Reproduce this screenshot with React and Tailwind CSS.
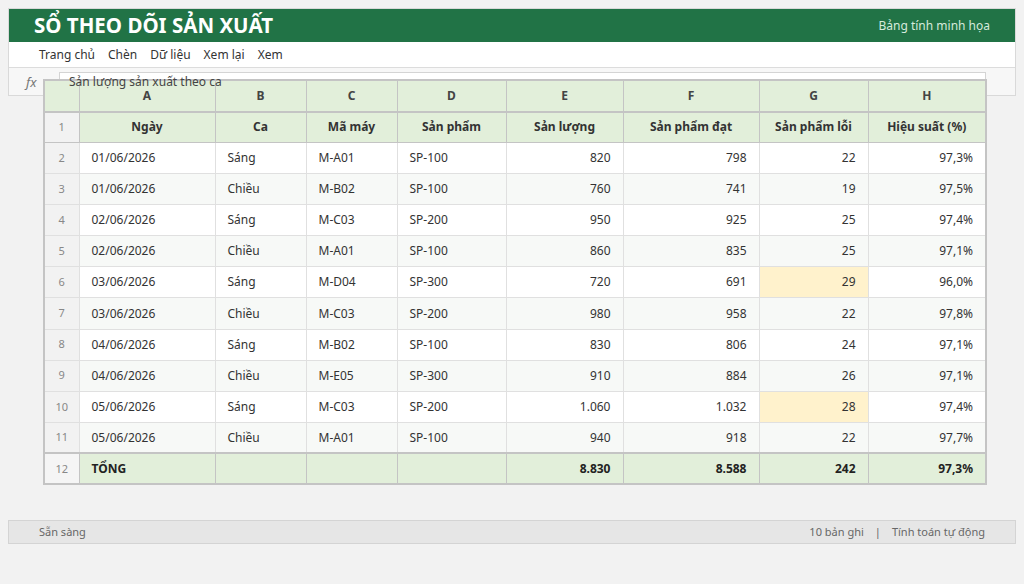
import React from "react";

const rows = [
  ["01/06/2026", "Sáng", "M-A01", "SP-100", "820", "798", "22", "97,3%"],
  ["01/06/2026", "Chiều", "M-B02", "SP-100", "760", "741", "19", "97,5%"],
  ["02/06/2026", "Sáng", "M-C03", "SP-200", "950", "925", "25", "97,4%"],
  ["02/06/2026", "Chiều", "M-A01", "SP-100", "860", "835", "25", "97,1%"],
  ["03/06/2026", "Sáng", "M-D04", "SP-300", "720", "691", "29", "96,0%", true],
  ["03/06/2026", "Chiều", "M-C03", "SP-200", "980", "958", "22", "97,8%"],
  ["04/06/2026", "Sáng", "M-B02", "SP-100", "830", "806", "24", "97,1%"],
  ["04/06/2026", "Chiều", "M-E05", "SP-300", "910", "884", "26", "97,1%"],
  ["05/06/2026", "Sáng", "M-C03", "SP-200", "1.060", "1.032", "28", "97,4%", true],
  ["05/06/2026", "Chiều", "M-A01", "SP-100", "940", "918", "22", "97,7%"],
];

const widths = [35, 136, 91, 91, 109, 117, 136, 109, 118];
const letters = ["A", "B", "C", "D", "E", "F", "G", "H"];
const titles = ["Ngày", "Ca", "Mã máy", "Sản phẩm", "Sản lượng", "Sản phẩm đạt", "Sản phẩm lỗi", "Hiệu suất (%)"];

export default function App() {
  return (
    <div
      className="min-h-[584px] bg-[#f2f2f2] px-2 pt-2 text-[#333]"
      style={{ fontFamily: '"Noto Sans", "Open Sans", sans-serif' }}
    >
      <div className="border border-[#d9d9d9]">
        <div className="flex h-[33px] items-center justify-between bg-[#217346] pl-[25px] pr-[25px]">
          <div className="text-[20.5px] font-bold leading-none text-white">SỔ THEO DÕI SẢN XUẤT</div>
          <div className="text-[12px] text-[#d6eadc]">Bảng tính minh họa</div>
        </div>
        <div className="flex h-[26px] items-center gap-[13px] border-b border-[#dcdcdc] bg-white pl-[30px] text-[12px] text-[#333]">
          <span>Trang chủ</span>
          <span>Chèn</span>
          <span>Dữ liệu</span>
          <span>Xem lại</span>
          <span>Xem</span>
        </div>
        <div className="flex h-[27px] items-start bg-[#f7f7f7] pr-[29px]">
          <div className="w-[50px] pt-[5px] pl-[17px] text-[13px] italic text-[#777]">fx</div>
          <div className="mt-[4px] h-[12px] flex-1 border border-b-0 border-[#d4d4d4] bg-white pl-[9px] text-[12px] leading-[17px] text-[#444]">
            <span className="relative z-10">Sản lượng sản xuất theo ca</span>
          </div>
        </div>
      </div>

      <div className="relative -mt-[17px] ml-[35px] w-[942px]">
        <table className="w-[942px] table-fixed border-collapse border-2 border-[#c4c4c4] text-[12px]">
          <colgroup>
            {widths.map((w, i) => (
              <col key={i} style={{ width: w }} />
            ))}
          </colgroup>
          <thead>
            <tr className="h-[31.5px] bg-[#e2efda]">
              <th className="border border-[#c4c4c4]"></th>
              {letters.map((l) => (
                <th key={l} className="border border-[#c4c4c4] pt-[1px] text-center text-[12px] font-bold text-[#444]">
                  {l}
                </th>
              ))}
            </tr>
          </thead>
          <tbody>
            <tr className="h-[31px]">
              <td className="border border-[#c4c4c4] border-t-2 bg-[#f2f2f2] text-center text-[11px] text-[#888]">1</td>
              {titles.map((t) => (
                <td key={t} className="border border-[#c4c4c4] border-t-2 bg-[#e2efda] text-center font-bold text-[#333]">
                  {t}
                </td>
              ))}
            </tr>
            {rows.map((r, i) => {
              const bg = i % 2 === 0 ? "bg-white" : "bg-[#f7f9f7]";
              return (
                <tr key={i} className="h-[31.1px]">
                  <td className="border border-[#e0e0e0] bg-[#f2f2f2] text-center text-[11px] text-[#888]">{i + 2}</td>
                  {r.slice(0, 8).map((c, j) => {
                    const right = j >= 4;
                    const hl = j === 6 && r[8];
                    return (
                      <td
                        key={j}
                        className={
                          "border border-[#e0e0e0] px-3 text-[#333] " +
                          (right ? "text-right " : "text-left ") +
                          (hl ? "bg-[#fff2cc]" : bg)
                        }
                      >
                        {c}
                      </td>
                    );
                  })}
                </tr>
              );
            })}
            <tr className="h-[31px]">
              <td className="border border-[#c4c4c4] border-t-2 bg-[#f5f5f5] text-center text-[11px] text-[#888]">12</td>
              <td className="border border-[#c4c4c4] border-t-2 bg-[#e2efda] px-3 font-bold text-[#222]">TỔNG</td>
              <td className="border border-[#c4c4c4] border-t-2 bg-[#e2efda]"></td>
              <td className="border border-[#c4c4c4] border-t-2 bg-[#e2efda]"></td>
              <td className="border border-[#c4c4c4] border-t-2 bg-[#e2efda]"></td>
              <td className="border border-[#c4c4c4] border-t-2 bg-[#e2efda] px-3 text-right font-bold text-[#222]">8.830</td>
              <td className="border border-[#c4c4c4] border-t-2 bg-[#e2efda] px-3 text-right font-bold text-[#222]">8.588</td>
              <td className="border border-[#c4c4c4] border-t-2 bg-[#e2efda] px-3 text-right font-bold text-[#222]">242</td>
              <td className="border border-[#c4c4c4] border-t-2 bg-[#e2efda] px-3 text-right font-bold text-[#222]">97,3%</td>
            </tr>
          </tbody>
        </table>
      </div>

      <div className="mt-[35px] flex h-[24px] items-center justify-between border border-[#d4d4d4] bg-[#e6e6e6] px-[30px] text-[11px] text-[#666]">
        <span>Sẵn sàng</span>
        <span>
          10 bản ghi<span className="mx-[11px]">|</span>Tính toán tự động
        </span>
      </div>
    </div>
  );
}
